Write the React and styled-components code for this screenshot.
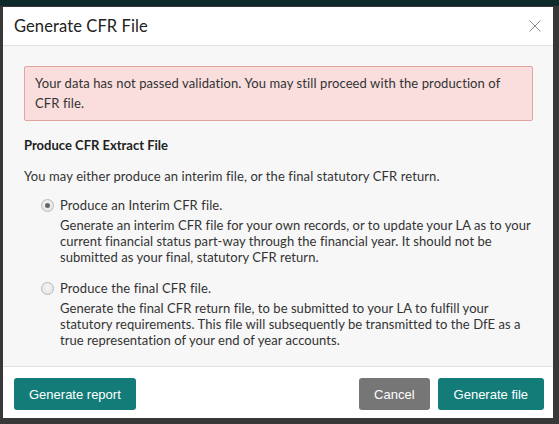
import React from 'react';
import styled, { createGlobalStyle } from 'styled-components';

const GlobalStyle = createGlobalStyle`
  html, body {
    margin: 0;
    padding: 0;
    background: #3b3b3b;
  }
  body {
    font-family: Lato, 'Open Sans', sans-serif;
    color: #333;
  }
`;

const Backdrop = styled('div')`
  width: 559px;
  height: 424px;
  background: #383838;
  overflow: hidden;
  border-top: 6px solid #0e2a2a;
  box-sizing: border-box;
  padding-top: 1px;
`;

const Modal = styled('div')`
  margin-left: 3px;
  width: 550px;
  background: #fff;
  display: flex;
  flex-direction: column;
`;

const Header = styled('div')`
  height: 38px;
  display: flex;
  align-items: center;
  justify-content: space-between;
  padding: 0 12px 0 11px;
  border-bottom: 1px solid #e2e2e2;
`;

const Title = styled('h4')`
  margin: 0;
  font-size: 16.5px;
  font-weight: 400;
  letter-spacing: 0.1px;
  color: #222;
`;

const CloseButton = styled('button')`
  border: 0;
  background: none;
  padding: 0;
  width: 12px;
  height: 12px;
  display: flex;
  cursor: pointer;
`;

const Body = styled('div')`
  background: #f7f7f7;
  padding: 20px 19px 18px 21px;
  height: 320px;
  box-sizing: border-box;
  font-size: 13px;
  letter-spacing: 0.1px;
`;

const Alert = styled('div')`
  background: #f9dedd;
  border: 1px solid #e3a3a1;
  border-radius: 2px;
  margin-right: 1px;
  padding: 6px 10px 7px;
  line-height: 20px;
  color: #333;
`;

const Heading = styled('h5')`
  margin: 14px 0 11px;
  font-size: 13px;
  font-weight: 700;
  line-height: 20px;
  letter-spacing: 0;
  color: #222;
`;

const Intro = styled('p')`
  margin: 0 0 9px;
  line-height: 20px;
`;

const Option = styled('label')`
  display: grid;
  grid-template-columns: 13px 1fr;
  column-gap: 6px;
  padding-left: 17px;
  margin-bottom: ${props => props.gap}px;
  cursor: pointer;
`;

const Radio = styled('input')`
  appearance: none;
  margin: 4px 0 0;
  width: 13px;
  height: 13px;
  border-radius: 50%;
  border: 1px solid #b9b9b9;
  background: radial-gradient(circle at 50% 40%, #f6f6f6 0%, #e0e0e0 100%);
  box-sizing: border-box;
  display: grid;
  place-items: center;

  &:checked::after {
    content: '';
    width: 5px;
    height: 5px;
    border-radius: 50%;
    background: #666;
  }
`;

const OptionText = styled('div')`
  display: flex;
  flex-direction: column;
  min-width: 0;
`;

const OptionLabel = styled('span')`
  line-height: 20px;
  margin-bottom: 2px;
`;

const OptionHint = styled('span')`
  line-height: 16px;
  letter-spacing: 0.05px;
`;

const Footer = styled('div')`
  height: 52px;
  border-top: 1px solid #e2e2e2;
  display: flex;
  align-items: flex-start;
  padding: 11px 9px 0 11px;
  box-sizing: border-box;
  gap: 8px;
`;

const Spacer = styled('div')`
  flex: 1;
`;

const Button = styled('button')`
  height: 32px;
  padding: 0 ${props => props.pad}px;
  border: 0;
  border-radius: 3px;
  background: ${props => props.bg};
  color: #fff;
  font-family: 'Liberation Sans', Arial, sans-serif;
  font-size: 13px;
  cursor: pointer;
`;

const App = () => (
  <>
    <GlobalStyle />
    <Backdrop>
      <Modal>
        <Header>
          <Title>Generate CFR File</Title>
          <CloseButton aria-label="Close">
            <svg width="12" height="12" viewBox="0 0 12 12">
              <path d="M0.5 0.5 L11.5 11.5 M11.5 0.5 L0.5 11.5" stroke="#8a8a8a" strokeWidth="1" fill="none" />
            </svg>
          </CloseButton>
        </Header>
        <Body>
          <Alert>
            Your data has not passed validation. You may still proceed with the production of CFR file.
          </Alert>
          <Heading>Produce CFR Extract File</Heading>
          <Intro>You may either produce an interim file, or the final statutory CFR return.</Intro>
          <Option gap={13}>
            <Radio type="radio" name="cfr" defaultChecked />
            <OptionText>
              <OptionLabel>Produce an Interim CFR file.</OptionLabel>
              <OptionHint>
                Generate an interim CFR file for your own records, or to update your LA as to your current financial status part-way through the financial year. It should not be submitted as your final, statutory CFR return.
              </OptionHint>
            </OptionText>
          </Option>
          <Option gap={0}>
            <Radio type="radio" name="cfr" />
            <OptionText>
              <OptionLabel>Produce the final CFR file.</OptionLabel>
              <OptionHint>
                Generate the final CFR return file, to be submitted to your LA to fulfill your statutory requirements. This file will subsequently be transmitted to the DfE as a true representation of your end of year accounts.
              </OptionHint>
            </OptionText>
          </Option>
        </Body>
        <Footer>
          <Button bg="#137c79" pad={15}>Generate report</Button>
          <Spacer />
          <Button bg="#767676" pad={15}>Cancel</Button>
          <Button bg="#137c79" pad={16}>Generate file</Button>
        </Footer>
      </Modal>
    </Backdrop>
  </>
);

export default App;
